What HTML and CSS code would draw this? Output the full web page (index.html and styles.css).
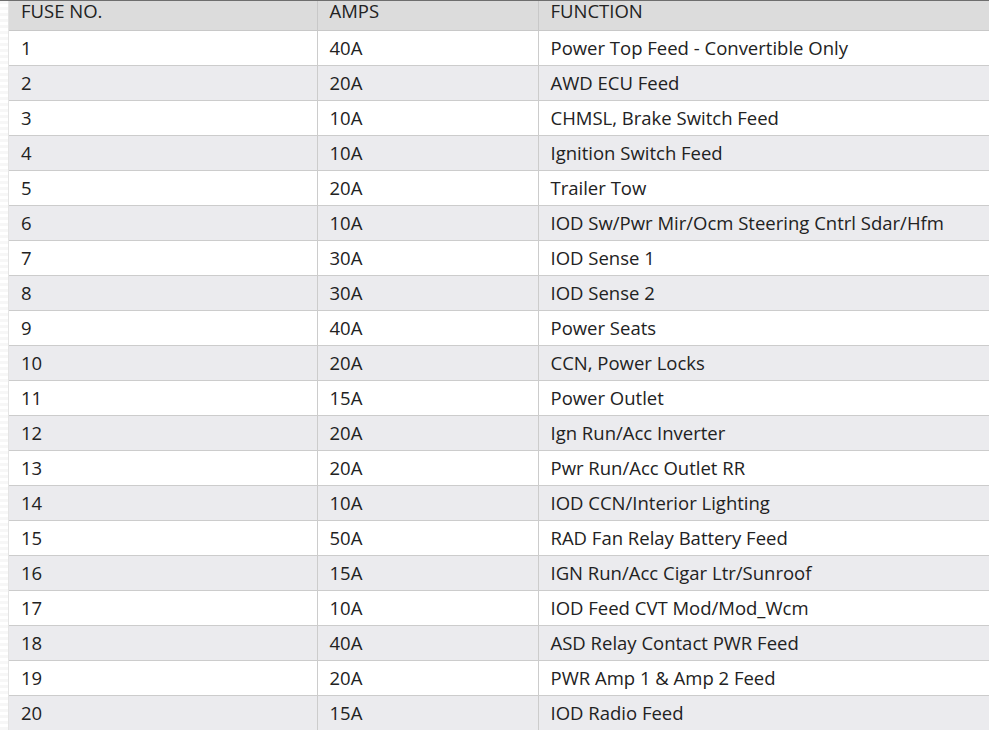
FILE: index.html
```html
<!DOCTYPE html>
<html>
<head>
<meta charset="utf-8">
<link rel="stylesheet" href="styles.css">
</head>
<body>
<div class="page">
  <div class="gutter"></div>
  <table class="fuses">
    <colgroup>
      <col class="c1"><col class="c2"><col class="c3">
    </colgroup>
    <thead>
      <tr><th>FUSE NO.</th><th>AMPS</th><th>FUNCTION</th></tr>
    </thead>
    <tbody>
      <tr><td>1</td><td>40A</td><td>Power Top Feed - Convertible Only</td></tr>
      <tr><td>2</td><td>20A</td><td>AWD ECU Feed</td></tr>
      <tr><td>3</td><td>10A</td><td>CHMSL, Brake Switch Feed</td></tr>
      <tr><td>4</td><td>10A</td><td>Ignition Switch Feed</td></tr>
      <tr><td>5</td><td>20A</td><td>Trailer Tow</td></tr>
      <tr><td>6</td><td>10A</td><td>IOD Sw/Pwr Mir/Ocm Steering Cntrl Sdar/Hfm</td></tr>
      <tr><td>7</td><td>30A</td><td>IOD Sense 1</td></tr>
      <tr><td>8</td><td>30A</td><td>IOD Sense 2</td></tr>
      <tr><td>9</td><td>40A</td><td>Power Seats</td></tr>
      <tr><td>10</td><td>20A</td><td>CCN, Power Locks</td></tr>
      <tr><td>11</td><td>15A</td><td>Power Outlet</td></tr>
      <tr><td>12</td><td>20A</td><td>Ign Run/Acc Inverter</td></tr>
      <tr><td>13</td><td>20A</td><td>Pwr Run/Acc Outlet RR</td></tr>
      <tr><td>14</td><td>10A</td><td>IOD CCN/Interior Lighting</td></tr>
      <tr><td>15</td><td>50A</td><td>RAD Fan Relay Battery Feed</td></tr>
      <tr><td>16</td><td>15A</td><td>IGN Run/Acc Cigar Ltr/Sunroof</td></tr>
      <tr><td>17</td><td>10A</td><td>IOD Feed CVT Mod/Mod_Wcm</td></tr>
      <tr><td>18</td><td>40A</td><td>ASD Relay Contact PWR Feed</td></tr>
      <tr><td>19</td><td>20A</td><td>PWR Amp 1 &amp; Amp 2 Feed</td></tr>
      <tr><td>20</td><td>15A</td><td>IOD Radio Feed</td></tr>
    </tbody>
  </table>
</div>
</body>
</html>
```
FILE: styles.css
```css
html, body {
  margin: 0;
  padding: 0;
  background: #ffffff;
}
.page {
  display: flex;
  border-top: 1px solid #6e6e6e;
  width: 989px;
  overflow: hidden;
}
.gutter {
  width: 8px;
  flex: none;
  background: repeating-linear-gradient(180deg, #f7f7f7 0 3px, #ffffff 3px 6px);
  border-right: 1px solid #e4e4e4;
}
.fuses {
  border-collapse: collapse;
  table-layout: fixed;
  width: 981px;
  flex: none;
  font-family: "Open Sans", "Noto Sans", sans-serif;
  font-size: 18.5px;
  color: #222222;
}
.c1 { width: 308px; }
.c2 { width: 221px; }
.c3 { width: 452px; }
.fuses th,
.fuses td {
  box-sizing: border-box;
}
.fuses th {
  background: #dcdcdc;
  font-weight: normal;
  text-align: left;
  height: 29px;
  padding: 0 0 0 12px;
  vertical-align: top;
  line-height: 20px;
  border-left: 1px solid #c8c8c8;
  border-bottom: 1px solid #c8c8c8;
}
.fuses td {
  height: 35px;
  padding: 0 0 0 12px;
  line-height: 34px;
  border-top: 1px solid #cccccc;
  border-left: 1px solid #cccccc;
  white-space: nowrap;
}
.fuses th:first-child, .fuses td:first-child {
  border-left: none;
}
.fuses tbody tr:nth-child(odd) td { background: #ffffff; }
.fuses tbody tr:nth-child(even) td { background: #ebebee; }
```
